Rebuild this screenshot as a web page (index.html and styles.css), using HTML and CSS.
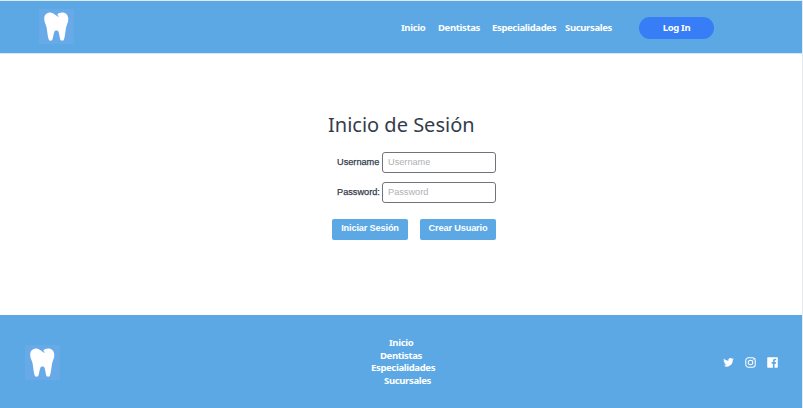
FILE: index.html
```html
<!DOCTYPE html>
<html lang="es">
<head>
<meta charset="utf-8">
<title>Inicio de Sesión</title>
<link rel="stylesheet" href="styles.css">
</head>
<body>
<svg width="0" height="0" class="defs" aria-hidden="true">
  <symbol id="tooth" viewBox="0 0 35 35">
    <path d="M5.2 9.8C5.2 5.8 8 3.6 11.2 3.6C14.500 3.600 16 6 18.700 7.600C19.300 7.900 19.900 7.500 19.500 7L18.200 5.800C19 4.300 21 3.600 23.200 3.600C26.800 3.600 29.300 6.200 29.300 10.200C29.300 13.800 27.500 15.500 27 19C26.300 23.500 26 27.500 24.900 30.800C24.500 32 21.700 32 21.300 30.800C20.400 28 20.500 25.500 19.600 23C18.900 21.100 16 21.100 15.300 23C14.400 25.500 14.200 28.500 13.300 30.800C12.800 32 10.200 32 9.800 30.800C8.700 27.500 8.300 23 7.700 19C7.100 15.500 5.200 13.500 5.200 9.800Z" fill="#fff"/>
  </symbol>
</svg>
<div class="page">
  <header class="header">
    <a class="logo"><svg><use href="#tooth"/></svg></a>
    <nav class="nav">
      <a class="w-inicio">Inicio</a>
      <a class="w-dentistas">Dentistas</a>
      <a class="w-especialidades">Especialidades</a>
      <a class="w-sucursales">Sucursales</a>
    </nav>
    <button class="login">Log In</button>
  </header>
  <main class="main">
    <h1>Inicio de Sesión</h1>
    <form class="form">
      <div class="row"><label for="user">Username</label><input id="user" type="text" placeholder="Username"></div>
      <div class="row"><label for="pass">Password:</label><input id="pass" type="password" placeholder="Password"></div>
      <div class="actions">
        <button type="button">Iniciar Sesión</button>
        <button type="button">Crear Usuario</button>
      </div>
    </form>
  </main>
  <footer class="footer">
    <a class="logo"><svg><use href="#tooth"/></svg></a>
    <ul class="links">
      <li class="f-inicio">Inicio</li>
      <li class="f-dentistas">Dentistas</li>
      <li class="f-especialidades">Especialidades</li>
      <li class="f-sucursales">Sucursales</li>
    </ul>
    <div class="social">
      <svg viewBox="0 0 24 24" fill="#fff"><path d="M23.500 4.600c-.8.400-1.700.6-2.700.7 1-.6 1.700-1.500 2-2.600-.9.600-1.900.9-3 1.100a4.700 4.700 0 0 0-8.100 4.300C7.800 7.900 4.300 6 2 3.100c-1.200 2.100-.6 4.900 1.500 6.300-.8 0-1.500-.2-2.100-.6 0 2.200 1.500 4.200 3.800 4.700-.7.200-1.400.2-2.100.1.600 1.900 2.300 3.200 4.400 3.300A9.500 9.500 0 0 1 .5 18.800 13.400 13.400 0 0 0 21.200 6.900c.9-.6 1.700-1.400 2.300-2.300z"/></svg>
      <svg viewBox="0 0 24 24" fill="none" stroke="#fff" stroke-width="2.200"><rect x="1.700" y="1.700" width="20.600" height="20.600" rx="6"/><circle cx="12" cy="12" r="5"/><circle cx="18" cy="6" r="1.300" fill="#fff" stroke="none"/></svg>
      <svg viewBox="0 0 24 24" fill="#fff"><path d="M2 .5h20A1.500 1.500 0 0 1 23.500 2v20a1.500 1.500 0 0 1-1.500 1.500h-5.500v-9h3l.5-3.500h-3.500V9c0-1.100.5-1.800 1.900-1.800H20V4.100c-.4-.1-1.400-.2-2.400-.2-2.800 0-4.600 1.600-4.600 4.600V11h-3v3.500h3v9H2A1.500 1.500 0 0 1 .5 22V2A1.500 1.500 0 0 1 2 .5z"/></svg>
    </div>
  </footer>
</div>
</body>
</html>
```
FILE: styles.css
```css
* { box-sizing: border-box; }
body { margin: 0; background: #fff; font-family: "Noto Sans", sans-serif; overflow: hidden; }
.defs { position: absolute; }
.page {
  display: flex;
  flex-direction: column;
  height: 408px;
  border-top: 1px solid #e0eaf2;
  border-right: 1px solid #e6ebf0;
}
.header {
  display: flex;
  height: 52px;
  background: #5ba8e5;
  padding-left: 39px;
}
.logo { display: block; width: 35px; height: 35px; background: #68a9e8; }
.logo svg { display: block; width: 35px; height: 35px; }
.header .logo { margin-top: 8px; }
.nav { display: flex; margin-left: 327px; padding-top: 20px; }
.nav a, .links li, .login { color: #fff; font-size: 9.5px; font-weight: 700; line-height: 13px; letter-spacing: -.35px; white-space: nowrap; }
.w-inicio { width: 37px; }
.w-dentistas { width: 54px; }
.w-especialidades { width: 73px; }
.w-sucursales { width: 74px; }
.login {
  width: 75px;
  height: 22px;
  margin-top: 16px;
  padding: 0 0 2px;
  border: 0;
  border-radius: 11px;
  background: #377df5;
  font-family: inherit;
}
.main { height: 262px; padding-left: 328px; border-top: 1px solid #d3e8f8; }
h1 { margin: 57px 0 0; font-size: 20px; font-weight: 400; line-height: 28px; color: #343c4c; white-space: nowrap; }
.form { width: 168px; padding-top: 13px; font-family: "Liberation Sans", Arial, sans-serif; }
.row { display: flex; align-items: center; justify-content: space-between; height: 21px; margin: 0 0 9px 9px; }
.row label { font-size: 9.2px; line-height: 21px; color: #343c4c; -webkit-text-stroke: .25px #343c4c; white-space: nowrap; }
.row input {
  width: 114px;
  height: 21px;
  padding: 0 5px 1px;
  border: 1px solid #70747a;
  border-radius: 3px;
  font: 9.2px "Liberation Sans", Arial, sans-serif;
}
.row input::placeholder { color: #b0b0b3; }
.actions { display: flex; justify-content: space-between; width: 164px; margin: 16px 0 0 4px; }
.actions button {
  width: 76px;
  height: 21px;
  padding: 0 0 3px;
  border: 0;
  border-radius: 2px;
  background: #5ba8e5;
  color: #fff;
  font: 700 9.2px "Liberation Sans", Arial, sans-serif;
  letter-spacing: -.15px;
  white-space: nowrap;
}
.footer { display: flex; flex: 1; background: #5ba8e5; padding-left: 25px; }
.footer .logo { margin-top: 30px; }
.links { width: 120px; margin: 22px 0 0 311px; padding: 0; list-style: none; }
.links li { line-height: 12.5px; }
.f-inicio { padding-left: 18px; }
.f-dentistas { padding-left: 9px; }
.f-sucursales { padding-left: 13px; }
.social { display: flex; gap: 11px; margin: 42px 0 0 232px; }
.social svg { width: 11px; height: 11px; }
```
